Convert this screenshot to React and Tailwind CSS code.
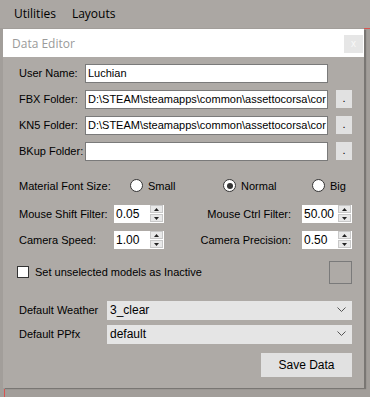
import React from 'react';

const labelFont = { fontFamily: '"Liberation Sans", Arial, sans-serif' };
const uiFont = { fontFamily: '"Open Sans", "Noto Sans", sans-serif' };

function Spin({ value }) {
  return (
    <div className="flex items-center w-[50px] h-[18px] bg-white">
      <span className="flex-1 pl-[2px] text-[12px] text-black leading-none">{value}</span>
      <div className="flex flex-col w-[13px] h-[17px] mr-[1px] gap-[1px]">
        <div className="flex-1 bg-[#e8e8e8] border border-[#c8c8c8] flex items-center justify-center">
          <svg width="5" height="3" viewBox="0 0 5 3"><path d="M0 3 L2.5 0 L5 3 Z" fill="#222" /></svg>
        </div>
        <div className="flex-1 bg-[#e8e8e8] border border-[#c8c8c8] flex items-center justify-center">
          <svg width="5" height="3" viewBox="0 0 5 3"><path d="M0 0 L2.5 3 L5 0 Z" fill="#222" /></svg>
        </div>
      </div>
    </div>
  );
}

function Radio({ checked, label, width }) {
  return (
    <div className="flex items-center gap-[5px]" style={width ? { width } : undefined}>
      <span className="w-[13px] h-[13px] rounded-full bg-white border border-[#333] flex items-center justify-center">
        {checked && <span className="w-[6px] h-[6px] rounded-full bg-[#333]" />}
      </span>
      <span>{label}</span>
    </div>
  );
}

function Chevron() {
  return (
    <svg width="9" height="6" viewBox="0 0 9 6" className="mr-[6px]">
      <path d="M0.5 0.5 L4.5 4.5 L8.5 0.5" fill="none" stroke="#555" strokeWidth="1" />
    </svg>
  );
}

export default function App() {
  const rows = [
    { label: 'User Name:', value: 'Luchian', btn: false },
    { label: 'FBX Folder:', value: 'D:\\STEAM\\steamapps\\common\\assettocorsa\\cor', btn: true },
    { label: 'KN5 Folder:', value: 'D:\\STEAM\\steamapps\\common\\assettocorsa\\cor', btn: true },
    { label: 'BKup Folder:', value: '', btn: true },
  ];

  return (
    <div className="w-[370px] h-[397px] bg-[#a29e9a] overflow-hidden flex flex-col" style={labelFont}>
      {/* Menu bar */}
      <div className="h-[28px] bg-[#aba7a3] flex items-center pl-[14px] gap-[16px] text-[12px] text-black" style={uiFont}>
        <span>Utilities</span>
        <span>Layouts</span>
      </div>
      <div className="flex h-px">
        <div className="flex-1" />
        <div className="w-[6px] bg-[#d9534f]" />
      </div>

      {/* Window */}
      <div className="ml-[3px] w-[361px] h-[360px] bg-[#aeaaa6] flex flex-col shadow-[2px_1px_1px_rgba(0,0,0,0.25)]">
        <div className="h-[28px] bg-white flex items-start justify-between">
          <span className="pl-[9px] pt-[6px] text-[12px] text-[#9a9a9a]" style={uiFont}>Data Editor</span>
          <div className="mt-[6px] mr-[1px] w-[19px] h-[18px] bg-[#e6e6e6] flex items-center justify-center text-[10px] text-[#f8f8f8]">x</div>
        </div>

        <div className="flex flex-col pl-[16px] pr-[12px] pt-[7px] text-[11px] text-black">
          {rows.map((r) => (
            <div key={r.label} className="flex items-center h-[19px] mb-[7px]">
              <span className="w-[66px]">{r.label}</span>
              <div className="w-[243px] h-[19px] bg-white border border-[#7a7a7a] flex items-center pl-[2px] overflow-hidden whitespace-nowrap text-[11px]">
                {r.value}
              </div>
              {r.btn && <div className="ml-[8px] w-[16px] h-[18px] bg-[#e1e1e1] flex items-end justify-center pb-[4px] leading-none">.</div>}
            </div>
          ))}

          <div className="flex items-center h-[14px] mt-[11px]">
            <span className="w-[111px]">Material Font Size:</span>
            <Radio label="Small" width={93} />
            <Radio checked label="Normal" width={89} />
            <Radio label="Big" />
          </div>

          <div className="flex items-center justify-between h-[18px] mt-[12px]">
            <div className="flex items-center">
              <span className="w-[95px]">Mouse Shift Filter:</span>
              <Spin value="0.05" />
            </div>
            <div className="flex items-center gap-[11px]">
              <span>Mouse Ctrl Filter:</span>
              <Spin value="50.00" />
            </div>
          </div>

          <div className="flex items-center justify-between h-[18px] mt-[8px]">
            <div className="flex items-center">
              <span className="w-[95px]">Camera Speed:</span>
              <Spin value="1.00" />
            </div>
            <div className="flex items-center gap-[11px]">
              <span>Camera Precision:</span>
              <Spin value="0.50" />
            </div>
          </div>

          <div className="flex items-center justify-between h-[23px] mt-[12px]">
            <div className="flex items-center gap-[6px] -ml-[2px]">
              <span className="w-[12px] h-[12px] bg-white border border-[#333]" />
              <span>Set unselected models as Inactive</span>
            </div>
            <div className="w-[23px] h-[23px] border border-[#7a7a7a]" />
          </div>

          <div className="flex items-center h-[19px] mt-[17px] text-[12px]">
            <span className="w-[88px] text-[11px]">Default Weather</span>
            <div className="flex-1 h-[19px] bg-[#e5e5e5] flex items-center justify-between pl-[3px]">
              <span>3_clear</span>
              <Chevron />
            </div>
          </div>
          <div className="flex items-center h-[19px] mt-[5px] text-[12px]">
            <span className="w-[88px] text-[11px]">Default PPfx</span>
            <div className="flex-1 h-[19px] bg-[#e5e5e5] flex items-center justify-between pl-[3px]">
              <span>default</span>
              <Chevron />
            </div>
          </div>

          <div className="flex justify-end mt-[9px]">
            <div className="w-[91px] h-[24px] bg-[#e1e1e1] flex items-center justify-center text-[12px]">Save Data</div>
          </div>
        </div>
      </div>

      <div className="ml-[4px] w-px h-[8px] mt-px bg-[#d9534f]" />
    </div>
  );
}
